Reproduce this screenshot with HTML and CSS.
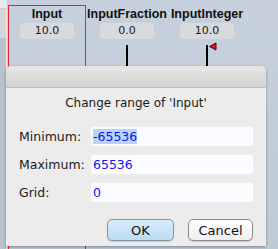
FILE: index.html
```html
<!DOCTYPE html>
<html lang="en">

<head>
     <meta charset="UTF-8">
     <meta name="viewport" content="width=device-width, initial-scale=1.0">
     <title>Change range</title>
     <link rel="stylesheet" href="styles.css">
</head>

<body>
     <div id="wrapper">
          <!-- left tool strip -->
          <div class="side-strip">
               <div class="strip-top"></div>
               <div class="strip-mid"></div>
               <div class="strip-low"></div>
          </div>

          <!-- canvas with the input nodes -->
          <div class="canvas">
               <div class="node selected">
                    <div class="node-title">Input</div>
                    <div class="node-value">10.0</div>
               </div>
               <div class="node">
                    <div class="node-title">InputFraction</div>
                    <div class="node-value">0.0</div>
                    <div class="node-wire"></div>
               </div>
               <div class="node">
                    <div class="node-title">InputInteger</div>
                    <div class="node-value">10.0</div>
                    <div class="node-wire">
                         <svg class="flag" width="9" height="9" viewBox="0 0 9 9">
                              <path d="M8 1 L1.5 4.5 L8 8 Z" fill="#e8141c" stroke="#3a0a0a" stroke-width="1"/>
                         </svg>
                    </div>
               </div>
          </div>

          <!-- range dialog -->
          <div class="dialog">
               <div class="dialog-bar"></div>
               <div class="dialog-body">
                    <h2 class="dialog-title">Change range of 'Input'</h2>
                    <div class="range-form">
                         <label>Minimum:</label>
                         <div class="field"><span class="picked">-65536</span></div>
                         <label>Maximum:</label>
                         <div class="field">65536</div>
                         <label>Grid:</label>
                         <div class="field">0</div>
                    </div>
                    <div class="dialog-buttons">
                         <button class="btn btn-ok">OK</button>
                         <button class="btn">Cancel</button>
                    </div>
               </div>
          </div>
     </div>
</body>

</html>
```

FILE: styles.css
```css
* {
     padding: 0;
     margin: 0;
     box-sizing: border-box;
     font-family: 'DejaVu Sans', 'Liberation Sans', sans-serif;
}

body {
     width: 278px;
     height: 249px;
     overflow: hidden;
     background: #bcc8d5;
}

#wrapper {
     position: relative;
     display: flex;
     width: 278px;
     height: 249px;
     background: linear-gradient(#c6d1dd, #bfcad7);
}

.side-strip {
     width: 7px;
     display: flex;
     flex-direction: column;
     border-right: 1px solid #e2e6ea;
}

.strip-top {
     height: 9px;
     background: #eaeaea;
     border-bottom: 1px solid #c9c9c9;
}

.strip-mid {
     height: 29px;
     background: #d6d6d6;
}

.strip-low {
     flex: 1;
     background: #b7c3cf;
}

.canvas {
     display: flex;
     padding-top: 5px;
}

.node {
     width: 78px;
     margin: 0 1px;
     display: flex;
     flex-direction: column;
     align-items: center;
     border: 1px solid transparent;
     border-bottom: none;
}

.node.selected {
     border-color: #e8262c;
}

.node-title {
     font-family: 'Liberation Sans', sans-serif;
     font-weight: bold;
     font-size: 12.5px;
     line-height: 14px;
     margin-top: 1px;
     color: #111;
     white-space: nowrap;
}

.node-value {
     margin-top: 2px;
     width: 54px;
     height: 16px;
     border-radius: 4px;
     background: #d8dade;
     font-size: 11px;
     line-height: 16px;
     text-align: center;
     color: #1c1c1c;
}

.node-wire {
     position: relative;
     margin-top: 6px;
     width: 2px;
     height: 40px;
     background: #000;
}

.flag {
     position: absolute;
     left: 2px;
     top: -3px;
}

.dialog {
     position: absolute;
     left: 6px;
     top: 66px;
     width: 260px;
     height: 180px;
     border-radius: 5px 5px 0 0;
     background: #ececec;
     box-shadow: 0 1px 3px rgba(0, 0, 0, 0.35);
     overflow: hidden;
}

.dialog-bar {
     height: 22px;
     background: linear-gradient(#e6e6e6, #d3d3d3);
     border-bottom: 1px solid #bdbdbd;
}

.dialog-body {
     padding: 0 13px;
}

.dialog-title {
     margin-top: 7px;
     font-weight: normal;
     font-size: 12px;
     line-height: 16px;
     text-align: center;
     color: #1a1a1a;
}

.range-form {
     display: grid;
     grid-template-columns: 72px 1fr;
     row-gap: 9px;
     margin-top: 16px;
     align-items: center;
}

.range-form label {
     font-size: 12.5px;
     color: #1a1a1a;
}

.field {
     height: 19px;
     padding-left: 2px;
     border-radius: 3px;
     background: #fbfcff;
     font-size: 12.5px;
     line-height: 19px;
     color: #1414f0;
}

.picked {
     background: #b5d5fb;
}

.dialog-buttons {
     display: flex;
     justify-content: flex-end;
     gap: 14px;
     margin-top: 17px;
}

.btn {
     width: 65px;
     height: 22px;
     font-size: 13px;
     color: #111;
     border: 1px solid #8c8c8c;
     border-radius: 5px;
     background: linear-gradient(#ffffff, #eeeeee);
     box-shadow: 0 1px 1px rgba(0, 0, 0, 0.15);
}

.btn-ok {
     width: 67px;
     border-color: #7f95ab;
     background: linear-gradient(#d7ecfb, #bcdcf3);
}
```
